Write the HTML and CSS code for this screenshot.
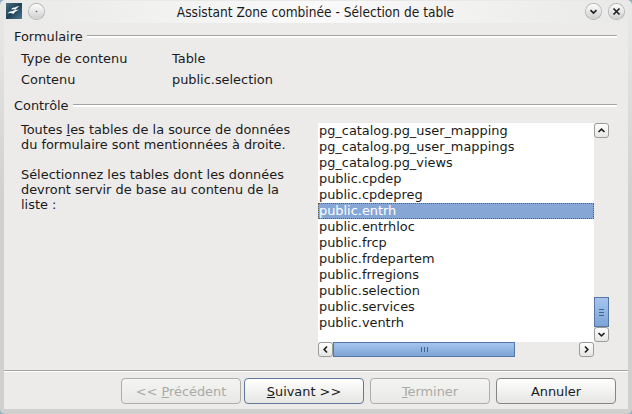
FILE: index.html
```html
<!DOCTYPE html>
<html lang="fr">

<head>
    <meta charset="utf-8">
    <title>Assistant Zone combinée - Sélection de table</title>
    <link rel="stylesheet" href="styles.css">
</head>

<body>
    <div class="window">
        <div class="titlebar">
            <svg class="app-icon" width="16" height="16" viewBox="0 0 16 16">
                <defs>
                    <linearGradient id="appbg" x1="0" y1="0" x2="1" y2="1">
                        <stop offset="0" stop-color="#4c6c80" />
                        <stop offset=".5" stop-color="#1d4258" />
                        <stop offset="1" stop-color="#4e7890" />
                    </linearGradient>
                </defs>
                <rect width="16" height="16" fill="url(#appbg)" />
                <path d="M5 6.5 Q7 4 8.5 4.8 Q10 2.8 13.5 3.2 Q11 4.5 9.5 6.7 Q8 5.8 5 6.5Z" fill="#fff" />
                <path d="M1.5 10.5 Q4 7.5 6.2 8.3 Q8 6.5 13 6.8 Q9 8.3 7.2 11 Q5 9.5 1.5 10.5Z" fill="#fff" />
            </svg>
            <span class="round menu"><svg width="15" height="15" viewBox="0 0 15 15"><circle cx="7.5" cy="7.5" r=".8" fill="#555" /></svg></span>
            <span class="title">Assistant Zone combinée - Sélection de table</span>
            <span class="round"><svg width="15" height="15" viewBox="0 0 15 15"><path d="M4.5 6.2 7.5 9 10.5 6.2" /></svg></span>
            <span class="round"><svg width="15" height="15" viewBox="0 0 15 15"><path d="M4.5 4.5 10.5 10.5 M10.5 4.5 4.5 10.5" /></svg></span>
        </div>

        <div class="content">
            <div class="group"><span class="group-name">Formulaire</span></div>
            <dl class="infos">
                <dt>Type de contenu</dt>
                <dd>Table</dd>
                <dt>Contenu</dt>
                <dd>public.selection</dd>
            </dl>

            <div class="group"><span class="group-name">Contrôle</span></div>
            <div class="control">
                <div class="help">
                    <p>Toutes <u>l</u>es tables de la source de données<br>du formulaire sont mentionnées à droite.</p>
                    <p>Sélectionnez les tables dont les données<br>devront servir de base au contenu de la<br>liste :</p>
                </div>
                <div class="listbox">
                    <ul class="list">
                        <li>pg_catalog.pg_user_mapping</li>
                        <li>pg_catalog.pg_user_mappings</li>
                        <li>pg_catalog.pg_views</li>
                        <li>public.cpdep</li>
                        <li>public.cpdepreg</li>
                        <li class="selected">public.entrh</li>
                        <li>public.entrhloc</li>
                        <li>public.frcp</li>
                        <li>public.frdepartem</li>
                        <li>public.frregions</li>
                        <li>public.selection</li>
                        <li>public.services</li>
                        <li>public.ventrh</li>
                    </ul>
                    <div class="vscroll">
                        <span class="arrow"><svg width="13" height="13" viewBox="0 0 13 13"><path d="M3.5 8 6.5 5.2 9.5 8" /></svg></span>
                        <span class="thumb"><svg width="5" height="7" viewBox="0 0 5 7"><path d="M0 .5H5M0 3.5H5M0 6.5H5" /></svg></span>
                        <span class="arrow"><svg width="13" height="13" viewBox="0 0 13 13"><path d="M3.5 5 6.5 7.8 9.5 5" /></svg></span>
                    </div>
                    <div class="hscroll">
                        <span class="arrow"><svg width="13" height="13" viewBox="0 0 13 13"><path d="M8 3.5 5.2 6.5 8 9.5" /></svg></span>
                        <span class="thumb"><svg width="7" height="5" viewBox="0 0 7 5"><path d="M.5 0V5M3.5 0V5M6.5 0V5" /></svg></span>
                        <span class="arrow"><svg width="13" height="13" viewBox="0 0 13 13"><path d="M5 3.5 7.8 6.5 5 9.5" /></svg></span>
                    </div>
                </div>
            </div>
        </div>

        <div class="buttons">
            <button class="previous" disabled>&lt;&lt; <u>P</u>récédent</button>
            <button class="next"><u>S</u>uivant &gt;&gt;</button>
            <button disabled><u>T</u>erminer</button>
            <button>Annuler</button>
        </div>
    </div>
</body>

</html>
```

FILE: styles.css
```css
* {
    box-sizing: border-box;
}

body {
    margin: 0;
    background-color: #8fb0bf;
    font-family: "DejaVu Sans", sans-serif;
    font-size: 12.9px;
    color: #1a1a1a;
}

.window {
    display: flex;
    flex-direction: column;
    width: 632px;
    height: 414px;
    padding: 1px 4px 5px;
    border-radius: 5px;
    background: linear-gradient(#e9e9e8, #e2e2e1 60px, #d0d0cf 200px);
    overflow: hidden;
}

.titlebar {
    display: flex;
    align-items: center;
    height: 22px;
    padding: 0 4px 2px 2px;
    background: linear-gradient(to right, #e9e9e8, #fafafa 50%, #e9e9e8);
}

.title {
    flex: 1;
    padding: 1px 0 0 9px;
    text-align: center;
    font-family: "DejaVu Sans Condensed", "DejaVu Sans", sans-serif;
    font-stretch: condensed;
    font-size: 13.6px;
    line-height: 18px;
}

.round {
    width: 15px;
    height: 15px;
    margin-left: 8px;
    border-radius: 50%;
    background: linear-gradient(#fdfdfd, #cfcfcf);
    box-shadow: 0 0 0 1px #b4b4b4;
}

.round svg {
    display: block;
}

.round.menu {
    margin-left: 7px;
}

.round path,
.arrow path {
    fill: none;
    stroke: #222;
    stroke-width: 1.7;
}

.content {
    flex: 1;
    padding: 6px 11px 0 10px;
    background-color: #ecebea;
}

/* section title followed by an etched line */
.group {
    display: flex;
    align-items: center;
    height: 15px;
}

.group::after {
    content: "";
    flex: 1;
    height: 2px;
    margin-left: 4px;
    border-top: 1px solid #a3a3a2;
    background-color: #fff;
}

.infos {
    display: grid;
    grid-template-columns: 151px 1fr;
    grid-auto-rows: 21px;
    margin: 4px 0 8px 7px;
    line-height: 21px;
}

.infos dd {
    margin: 0;
}

.control {
    display: flex;
    padding: 10px 8px 0 7px;
}

.help {
    width: 297px;
    margin-top: -1px;
    line-height: 15px;
}

.help p {
    margin: 0 0 15px;
}

.listbox {
    display: grid;
    grid-template-columns: 276px 15px;
    grid-template-rows: 219px 15px;
}

.list {
    margin: 0;
    padding: 0;
    list-style: none;
    background-color: #fff;
    line-height: 16px;
}

.list li {
    height: 16px;
    padding-left: 1px;
}

.list .selected {
    background-color: #86a7d6;
    outline: 1px dotted #6b5c3c;
    outline-offset: -1px;
    color: #fff;
}

.vscroll,
.hscroll {
    display: flex;
    justify-content: space-between;
}

.vscroll {
    flex-direction: column;
}

.arrow {
    width: 15px;
    height: 15px;
    border: 1px solid #9b9b99;
    border-radius: 3px;
    background: linear-gradient(#fefefe, #e6e6e4);
}

.arrow svg {
    display: block;
}

.thumb {
    display: flex;
    align-items: center;
    justify-content: center;
    border: 1px solid #5577a3;
    background: linear-gradient(#a5c5ee, #7ea4d7);
}

.thumb path {
    stroke: #3f628f;
}

.vscroll .thumb {
    height: 30px;
    margin-top: auto;
}

.hscroll .thumb {
    width: 182px;
    margin-right: auto;
}

.buttons {
    display: flex;
    justify-content: flex-end;
    gap: 6px;
    height: 39px;
    padding: 7px 12px 0 0;
    border-top: 1px solid #a3a3a2;
    box-shadow: inset 0 1px #fff;
    background-color: #ecebea;
}

button {
    width: 120px;
    height: 26px;
    padding: 0;
    border: 1px solid #858583;
    border-radius: 4px;
    background: linear-gradient(#fff, #e5e5e3);
    font-family: inherit;
    font-size: 12.9px;
    color: #1a1a1a;
}

button:disabled {
    border-color: #adadab;
    background: linear-gradient(#f4f4f3, #e8e8e6);
    color: #aaaaa6;
}

.previous {
    margin-right: -3px;
}

.next {
    border-color: #62789a;
}
```
